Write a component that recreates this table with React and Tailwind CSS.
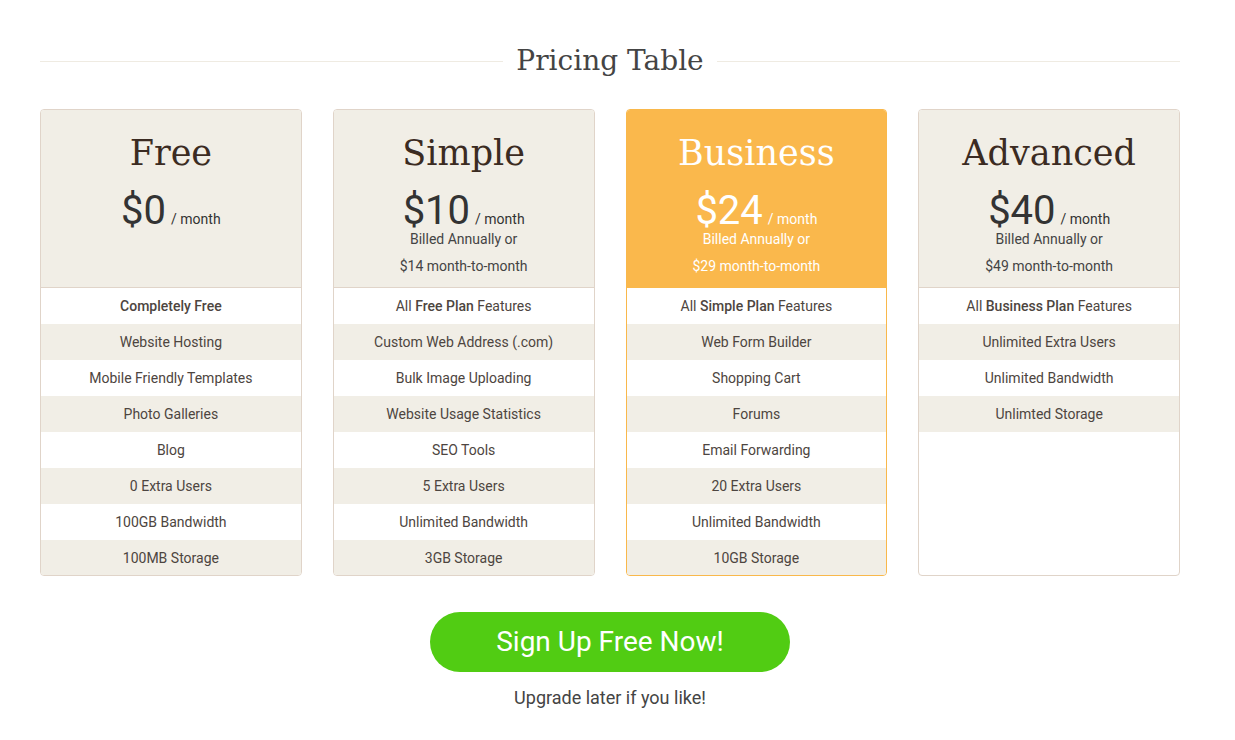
const plans = [
  {
    name: "Free",
    price: "$0",
    billed: null,
    features: [<b key="b" className="font-medium">Completely Free</b>, "Website Hosting", "Mobile Friendly Templates", "Photo Galleries", "Blog", "0 Extra Users", "100GB Bandwidth", "100MB Storage"],
  },
  {
    name: "Simple",
    price: "$10",
    billed: "$14 month-to-month",
    features: [<span key="a">All <b className="font-medium">Free Plan</b> Features</span>, "Custom Web Address (.com)", "Bulk Image Uploading", "Website Usage Statistics", "SEO Tools", "5 Extra Users", "Unlimited Bandwidth", "3GB Storage"],
  },
  {
    name: "Business",
    price: "$24",
    billed: "$29 month-to-month",
    featured: true,
    features: [<span key="a">All <b className="font-medium">Simple Plan</b> Features</span>, "Web Form Builder", "Shopping Cart", "Forums", "Email Forwarding", "20 Extra Users", "Unlimited Bandwidth", "10GB Storage"],
  },
  {
    name: "Advanced",
    price: "$40",
    billed: "$49 month-to-month",
    features: [<span key="a">All <b className="font-medium">Business Plan</b> Features</span>, "Unlimited Extra Users", "Unlimited Bandwidth", "Unlimted Storage"],
  },
];

function Card({ plan }) {
  const f = plan.featured;
  return (
    <div className={`flex flex-col h-[467px] rounded-[4px] border overflow-hidden bg-white ${f ? "border-[#f9b84b]" : "border-[#e0d4c9]"}`}>
      <div className={`h-[178px] shrink-0 border-b pt-[19px] flex flex-col items-center ${f ? "bg-[#fab84c] border-[#f9b84b] text-white" : "bg-[#f1eee6] border-[#e0d4c9]"}`}>
        <div className={`text-[35px] leading-[48px] ${f ? "text-white" : "text-[#3b2b22]"}`} style={{ fontFamily: '"DejaVu Serif", serif' }}>
          {plan.name}
        </div>
        <div className={`mt-[18px] h-[31px] flex items-baseline justify-center ${f ? "text-white" : "text-[#333]"}`}>
          <span className="text-[40px] leading-[31px]">{plan.price}</span>
          <span className="text-[14px] leading-[31px] ml-[5px]">/ month</span>
        </div>
        {plan.billed && (
          <div className={`text-[14px] leading-[27px] text-center ${f ? "text-white" : "text-[#444]"}`}>
            <div>Billed Annually or</div>
            <div>{plan.billed}</div>
          </div>
        )}
      </div>
      <div className="flex flex-col">
        {plan.features.map((ft, i) => (
          <div key={i} className={`h-[36px] shrink-0 flex items-center justify-center text-[14px] text-[#4d4540] ${i % 2 === 1 ? "bg-[#f1eee6]" : "bg-white"}`}>
            {ft}
          </div>
        ))}
      </div>
    </div>
  );
}

export default function App() {
  return (
    <div className="bg-white min-h-[740px] w-[1235px]" style={{ fontFamily: 'Roboto, "Liberation Sans", sans-serif' }}>
      <div className="ml-[40px] w-[1140px] pt-[41px]">
        <div className="flex items-center">
          <div className="flex-1 h-px bg-[#efebe2]"></div>
          <div className="px-[13px] text-[28px] leading-[40px] text-[#444]" style={{ fontFamily: '"DejaVu Serif", serif' }}>
            Pricing Table
          </div>
          <div className="flex-1 h-px bg-[#efebe2]"></div>
        </div>
        <div className="mt-[28px] grid grid-cols-4 gap-[31px]">
          {plans.map((p) => (
            <Card key={p.name} plan={p} />
          ))}
        </div>
        <div className="mt-[36px] flex flex-col items-center">
          <button className="w-[360px] h-[60px] rounded-full bg-[#51cc13] text-white text-[28px]">
            Sign Up Free Now!
          </button>
          <div className="mt-[13px] text-[18px] leading-[26px] text-[#444]">Upgrade later if you like!</div>
        </div>
      </div>
    </div>
  );
}
